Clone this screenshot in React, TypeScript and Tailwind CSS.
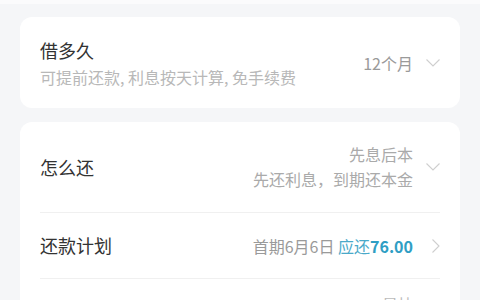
const font = { fontFamily: '"Noto Sans CJK SC", "Noto Sans", sans-serif' }

function ChevronDown() {
  return (
    <svg width="14" height="8" viewBox="0 0 14 8" fill="none" className="shrink-0">
      <path d="M0.5 0.5L7 7L13.5 0.5" stroke="#cfcfcf" strokeWidth="1.1" />
    </svg>
  )
}

function ChevronRight() {
  return (
    <svg width="8" height="14" viewBox="0 0 8 14" fill="none" className="shrink-0">
      <path d="M0.5 0.5L7 7L0.5 13.5" stroke="#cfcfcf" strokeWidth="1.1" />
    </svg>
  )
}

export default function App() {
  return (
    <div className="w-[480px] h-[300px] overflow-hidden bg-[#f5f6f8]" style={font}>
      <div className="h-[4px] bg-[#fbfbfc]" />
      <div className="px-5 pt-[13px] space-y-[14px]">
        {/* 借多久 */}
        <div className="h-[91px] rounded-[12px] bg-white px-5 flex items-center justify-between">
          <div>
            <p className="text-[18px] leading-[24px] text-[#333]">借多久</p>
            <p className="mt-[4px] text-[16px] leading-[22px] text-[#b8b8b8]">
              可提前还款, 利息按天计算, 免手续费
            </p>
          </div>
          <div className="flex items-center gap-[13px]">
            <span className="text-[16px] text-[#9a9a9a]">12个月</span>
            <ChevronDown />
          </div>
        </div>

        {/* 怎么还 / 还款计划 */}
        <div className="rounded-[12px] bg-white h-[200px]">
          <div className="mx-5 h-[91px] border-b border-[#f0f0f0] flex items-center justify-between">
            <p className="text-[18px] text-[#333]">怎么还</p>
            <div className="flex items-center gap-[13px]">
              <div className="text-right text-[16px] leading-[25px] text-[#aaa]">
                <p>先息后本</p>
                <p>先还利息，到期还本金</p>
              </div>
              <ChevronDown />
            </div>
          </div>
          <div className="mx-5 h-[66px] border-b border-[#f0f0f0] flex items-center justify-between">
            <p className="text-[18px] text-[#333]">还款计划</p>
            <div className="flex items-center gap-[19px]">
              <p className="text-[16px] text-[#9a9a9a]">
                首期6月6日 <span className="text-[#4aa9c9]">应还</span>
                <span className="font-bold text-[#2f9ec4]">76.00</span>
              </p>
              <ChevronRight />
            </div>
          </div>
          <div className="mx-5 h-[40px] flex justify-end pr-[26px] pt-[14px]">
            <span className="text-[16px] leading-[22px] text-[#bbb]">最快</span>
          </div>
        </div>
      </div>
    </div>
  )
}
